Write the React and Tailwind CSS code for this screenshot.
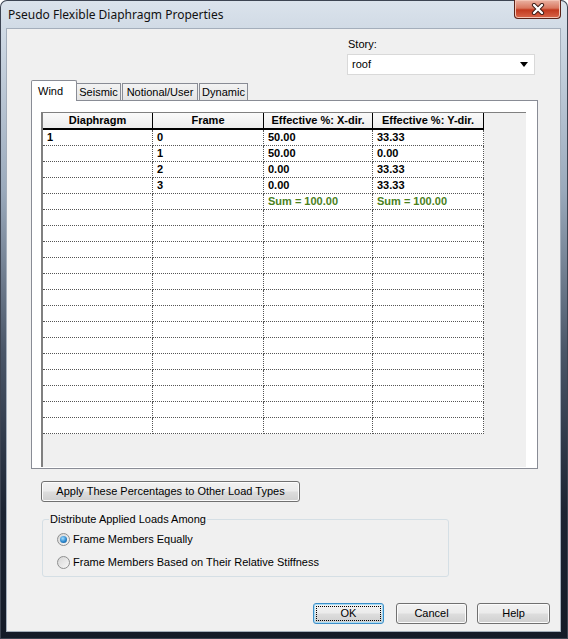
// # Pseudo Flexible Diaphragm Properties dialog #

const widths = ["w-[110px]", "w-[111px]", "w-[109px]", "w-[111px]"];

const rows = [
    ["1", "0", "50.00", "33.33"],
    ["", "1", "50.00", "0.00"],
    ["", "2", "0.00", "33.33"],
    ["", "3", "0.00", "33.33"],
    ["", "", "Sum = 100.00", "Sum = 100.00", true],
    ...Array.from({ length: 14 }, () => ["", "", "", ""]),
];

const Button = ({ children, className, isDefault }) => (
    <div
        className={`h-[21px] rounded-[3px] border flex items-stretch justify-center bg-[linear-gradient(to_bottom,#f2f2f2_0%,#ebebeb_48%,#dddddd_52%,#cfcfcf_100%)] ${isDefault
            ? "border-[#3c8fc9] shadow-[inset_0_0_0_1px_#a9dcf5]"
            : "border-[#707070] shadow-[inset_0_0_0_1px_#fbfbfb]"
            } ${className}`}
    >
        {isDefault ? (
            <div className="m-[2px] flex-1 border border-dotted border-black flex items-center justify-center">
                {children}
            </div>
        ) : (
            <div className="flex items-center justify-center">{children}</div>
        )}
    </div>
);

const Radio = ({ checked, label }) => (
    <div className="flex items-center h-[16px] pl-[14px]">
        <div className="w-[13px] h-[13px] rounded-full border border-[#8e8f8f] bg-[linear-gradient(to_bottom_right,#d6d6d6,#f7f7f7)] flex items-center justify-center">
            {checked && (
                <div className="w-[7px] h-[7px] rounded-full bg-[radial-gradient(circle_at_40%_35%,#9fdcff_0%,#2b86cc_55%,#0d4b86_100%)]" />
            )}
        </div>
        <span className="ml-[3px]">{label}</span>
    </div>
);

export default function App() {
    return (
        <div className="w-[568px] h-[639px] overflow-hidden rounded-t-[7px] shadow-[inset_0_0_0_1px_#3d4452] bg-[linear-gradient(to_bottom,#dbe3ec_0%,#c9d4e0_8%,#9aa9bb_30%,#4a5668_55%,#1c2433_80%,#141b28_100%)] flex flex-col font-['Liberation_Sans',Arial,sans-serif] text-[11px] text-black">

            {/* # Title Bar # */}
            <div className="h-[28px] flex justify-between items-start">
                <div className="pl-[8px] pt-[7px] text-[12px] leading-[16px] font-['Noto_Sans',sans-serif] text-[#111]">
                    Pseudo Flexible Diaphragm Properties
                </div>
                <div className="mr-[7px] w-[47px] h-[19px] rounded-b-[4px] border border-t-0 border-[#5b2218] bg-[linear-gradient(to_bottom,#eab3a4_0%,#d9775f_45%,#c2391f_55%,#d8664a_100%)] shadow-[inset_0_0_0_1px_#f3c3b4] flex items-center justify-center">
                    <svg width="16" height="12" viewBox="0 0 16 12">
                        <path d="M4 2 L12 10 M12 2 L4 10" stroke="#3a1a14" strokeWidth="4.2" strokeLinecap="round" />
                        <path d="M4 2 L12 10 M12 2 L4 10" stroke="#ffffff" strokeWidth="2.4" strokeLinecap="round" />
                    </svg>
                </div>
            </div>

            {/* # Client Area # */}
            <div className="ml-[6px] w-[555px] h-[604px] border border-[#a4aebb] bg-[#f0f0f0] flex flex-col">

                {/* # Story # */}
                <div className="pl-[340px] pt-[8px]">
                    <div className="h-[14px] leading-[14px] pl-[1px]">Story:</div>
                    <div className="mt-[3px] w-[188px] h-[21px] border border-[#d9d9d9] bg-white flex items-center justify-between pl-[4px] pr-[6px]">
                        <span>roof</span>
                        <svg width="8" height="5" viewBox="0 0 8 5">
                            <path d="M0 0 H8 L4 5 Z" fill="#000" />
                        </svg>
                    </div>
                </div>

                {/* # Tabs # */}
                <div className="mt-[5px] ml-[24px] h-[21px] -mb-px flex items-end relative z-10">
                    <div className="w-[46px] h-[21px] bg-white border-l border-t border-r border-[#898c95] rounded-t-[2px] pl-[6px] pt-[3px] leading-[14px]">
                        Wind
                    </div>
                    <div className="w-[44px] h-[17px] mb-px border-l-0 border-t border-r border-[#898c95] bg-[linear-gradient(to_bottom,#f3f3f3,#e4e4e4)] flex items-center justify-center">
                        Seismic
                    </div>
                    <div className="ml-[1px] w-[76px] h-[17px] mb-px border-l border-t border-r border-[#898c95] bg-[linear-gradient(to_bottom,#f3f3f3,#e4e4e4)] flex items-center justify-center">
                        Notional/User
                    </div>
                    <div className="ml-[1px] w-[49px] h-[17px] mb-px border-l border-t border-r border-[#898c95] bg-[linear-gradient(to_bottom,#f3f3f3,#e4e4e4)] flex items-center justify-center">
                        Dynamic
                    </div>
                </div>

                {/* # Tab Panel # */}
                <div className="ml-[24px] w-[507px] h-[369px] border border-[#898c95] bg-white">
                    <div className="mt-[11px] ml-[9px] w-[485px] h-[355px] border-l-2 border-t border-[#808080] bg-[#f0f0f0] font-bold">

                        {/* # Header # */}
                        <div className="flex h-[17px]">
                            {["Diaphragm", "Frame", "Effective %: X-dir.", "Effective %: Y-dir."].map((h, i) => (
                                <div
                                    key={h}
                                    className={`${widths[i]} h-[17px] border-r border-b-2 border-black bg-[linear-gradient(to_bottom,#fafafa,#ececec)] flex items-center justify-center`}
                                >
                                    {h}
                                </div>
                            ))}
                        </div>

                        {/* # Rows # */}
                        {rows.map((r, ri) => (
                            <div key={ri} className="flex h-[16px]">
                                {[0, 1, 2, 3].map((ci) => (
                                    <div
                                        key={ci}
                                        className={`${widths[ci]} h-[16px] bg-white border-r border-b border-dotted border-[#555] pl-[4px] flex items-center ${r[4] ? "text-[#4a7f1c]" : ""}`}
                                    >
                                        {r[ci]}
                                    </div>
                                ))}
                            </div>
                        ))}
                    </div>
                </div>

                {/* # Apply Button # */}
                <Button className="mt-[12px] ml-[34px] w-[259px]">
                    Apply These Percentages to Other Load Types
                </Button>

                {/* # Distribute Group # */}
                <fieldset className="mt-[11px] ml-[35px] w-[407px] border border-[#d5dfe5] rounded-[3px] pb-[6px]">
                    <legend className="ml-[6px] px-[1px] leading-[13px]">Distribute Applied Loads Among</legend>
                    <div className="mt-[5px]">
                        <Radio checked label="Frame Members Equally" />
                    </div>
                    <div className="mt-[7px]">
                        <Radio label="Frame Members Based on Their Relative Stiffness" />
                    </div>
                </fieldset>

                {/* # Dialog Buttons # */}
                <div className="mt-auto mb-[7px] pl-[306px] flex">
                    <Button isDefault className="w-[71px]">OK</Button>
                    <Button className="ml-[12px] w-[71px]">Cancel</Button>
                    <Button className="ml-[10px] w-[73px]">Help</Button>
                </div>
            </div>
        </div>
    );
}
